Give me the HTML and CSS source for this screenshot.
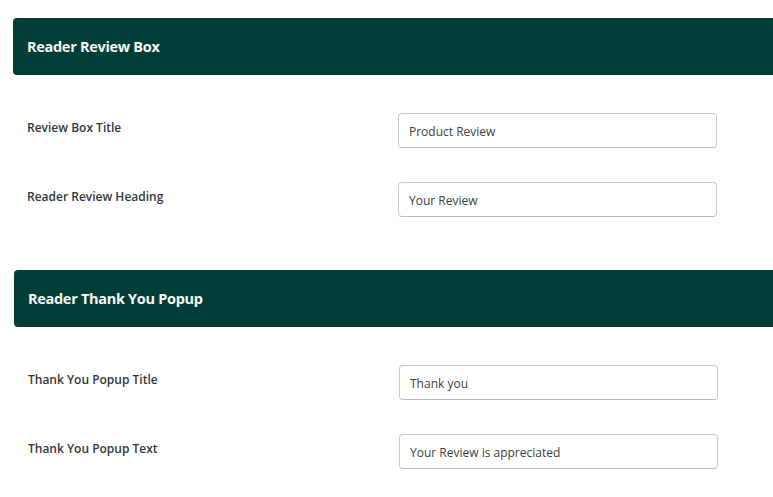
FILE: index.html
```html
<!DOCTYPE html>
<html>
<head>
<meta charset="utf-8">
<link rel="stylesheet" href="styles.css">
</head>
<body>
<div class="page">
  <section class="panel">
    <h2 class="panel-head">Reader Review Box</h2>
    <div class="fields">
      <div class="row">
        <label class="label">Review Box Title</label>
        <input class="input" type="text" value="Product Review">
      </div>
      <div class="row">
        <label class="label">Reader Review Heading</label>
        <input class="input" type="text" value="Your Review">
      </div>
    </div>
  </section>
  <section class="panel panel-shift">
    <h2 class="panel-head">Reader Thank You Popup</h2>
    <div class="fields">
      <div class="row">
        <label class="label">Thank You Popup Title</label>
        <input class="input" type="text" value="Thank you">
      </div>
      <div class="row">
        <label class="label">Thank You Popup Text</label>
        <input class="input" type="text" value="Your Review is appreciated">
      </div>
    </div>
  </section>
</div>
</body>
</html>
```

FILE: styles.css
```css
html, body {
  margin: 0;
  padding: 0;
  background: #ffffff;
  font-family: "Open Sans", "Noto Sans", sans-serif;
  overflow: hidden;
}

.page {
  padding-top: 18px;
  display: flex;
  flex-direction: column;
  gap: 53px;
}

.panel {
  margin-left: 13px;
}

.panel-shift {
  margin-left: 14px;
}

.panel-head {
  margin: 0;
  height: 57px;
  display: flex;
  align-items: center;
  padding-left: 14px;
  background: #023e37;
  color: #f4f8f7;
  font-size: 14.5px;
  font-weight: 700;
  border-radius: 4px 0 0 4px;
  letter-spacing: -0.3px;
}

.fields {
  padding-top: 38px;
  display: flex;
  flex-direction: column;
  gap: 34px;
}

.row {
  display: grid;
  grid-template-columns: 371px 319px;
  padding-left: 14px;
  align-items: start;
}

.label {
  padding-top: 6px;
  font-size: 12px;
  font-weight: 600;
  color: #33373b;
}

.input {
  box-sizing: border-box;
  height: 35px;
  width: 319px;
  margin: 0;
  padding: 2px 10px 0;
  border: 1px solid #c9c9c9;
  border-bottom-color: #bdbdbd;
  border-radius: 4px;
  font-family: "Open Sans", "Noto Sans", sans-serif;
  font-size: 12px;
  color: #3a3f44;
  background: #ffffff;
  outline: none;
}
```
